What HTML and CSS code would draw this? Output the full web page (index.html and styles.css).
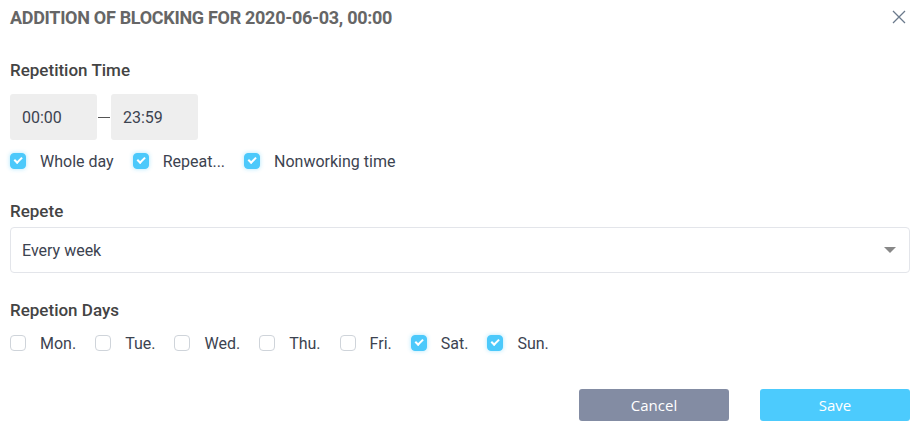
FILE: index.html
```html
<!DOCTYPE html>
<html lang="en">
<head>
    <meta charset="UTF-8">
    <title>Addition of blocking</title>
    <link rel="stylesheet" href="styles.css">
</head>
<body>
    <div class="dialog">
        <header class="dialog-head">
            <h1 class="dialog-title">ADDITION OF BLOCKING FOR 2020-06-03, 00:00</h1>
            <button class="close-btn" aria-label="Close">
                <svg width="14" height="14" viewBox="0 0 14 14"><path d="M1 1L13 13M13 1L1 13" stroke="#6b7a8c" stroke-width="1.3" fill="none"/></svg>
            </button>
        </header>

        <section class="field time-field">
            <h2 class="field-label">Repetition Time</h2>
            <div class="time-range">
                <div class="time-input">00:00</div>
                <span class="time-dash"></span>
                <div class="time-input">23:59</div>
            </div>
            <div class="check-row">
                <label class="check"><span class="box checked"></span>Whole day</label>
                <label class="check"><span class="box checked"></span>Repeat...</label>
                <label class="check"><span class="box checked"></span>Nonworking time</label>
            </div>
        </section>

        <section class="field repeat-field">
            <h2 class="field-label">Repete</h2>
            <div class="select">
                <span>Every week</span>
                <span class="select-arrow"></span>
            </div>
        </section>

        <section class="field days-field">
            <h2 class="field-label">Repetion Days</h2>
            <div class="check-row days">
                <label class="check"><span class="box"></span>Mon.</label>
                <label class="check"><span class="box"></span>Tue.</label>
                <label class="check"><span class="box"></span>Wed.</label>
                <label class="check"><span class="box"></span>Thu.</label>
                <label class="check"><span class="box"></span>Fri.</label>
                <label class="check"><span class="box checked"></span>Sat.</label>
                <label class="check"><span class="box checked"></span>Sun.</label>
            </div>
        </section>

        <footer class="dialog-actions">
            <button class="btn btn-cancel">Cancel</button>
            <button class="btn btn-save">Save</button>
        </footer>
    </div>
</body>
</html>
```

FILE: styles.css
```css
*, *::before, *::after {
    box-sizing: border-box;
}

body {
    margin: 0;
    background: #ffffff;
    font-family: 'Roboto', 'Liberation Sans', sans-serif;
    color: #444a52;
}

.dialog {
    width: 913px;
    padding: 5px 4px 0 10px;
}

.dialog-head {
    display: flex;
    justify-content: space-between;
    align-items: center;
    height: 24px;
}

.dialog-title {
    margin: 0;
    font-size: 18px;
    font-weight: 700;
    color: #666666;
    letter-spacing: -0.3px;
}

.close-btn {
    background: none;
    border: none;
    padding: 0;
    margin-right: 2px;
    width: 16px;
    height: 16px;
    display: flex;
    align-items: center;
    justify-content: center;
    cursor: pointer;
}

.field-label {
    margin: 0;
    font-size: 17px;
    font-weight: 500;
    color: #444444;
    line-height: 20px;
}

.time-field {
    margin-top: 31px;
}

.repeat-field {
    margin-top: 29px;
}

.days-field {
    margin-top: 27px;
}

.time-range {
    display: flex;
    align-items: center;
    margin-top: 14px;
}

.time-input {
    width: 87px;
    height: 46px;
    background: #eeeeee;
    border-radius: 3px;
    font-size: 16px;
    color: #3c4350;
    padding: 0 12px;
    display: flex;
    align-items: center;
}

.time-dash {
    display: block;
    width: 12px;
    height: 1px;
    background: #555555;
    margin: 0 1px;
}

.check-row {
    display: flex;
    align-items: center;
    gap: 19px;
    margin-top: 10px;
    height: 22px;
}

.check {
    display: flex;
    align-items: center;
    gap: 14px;
    font-size: 16px;
    color: #3c4350;
    cursor: pointer;
}

.box {
    width: 16px;
    height: 16px;
    border: 1px solid #cfd4da;
    border-radius: 4px;
    background: #ffffff;
    position: relative;
}

.box.checked {
    background: #4cc9fb;
    border-color: #4cc9fb;
    box-shadow: 0 0 4px rgba(76, 201, 251, 0.45);
}

.box.checked::after {
    content: "";
    position: absolute;
    left: 3px;
    top: 3px;
    width: 8px;
    height: 4.5px;
    border-left: 2px solid #ffffff;
    border-bottom: 2px solid #ffffff;
    transform: rotate(-45deg);
}

.select {
    margin-top: 6px;
    width: 900px;
    height: 46px;
    border: 1px solid #e3e5ea;
    border-radius: 4px;
    padding: 0 11px;
    display: flex;
    align-items: center;
    justify-content: space-between;
    font-size: 16px;
    color: #3c4350;
}

.select-arrow {
    width: 0;
    height: 0;
    border-left: 6px solid transparent;
    border-right: 6px solid transparent;
    border-top: 6px solid #888888;
    margin-right: 2px;
}

.days {
    margin-top: 12px;
}

.dialog-actions {
    display: flex;
    justify-content: flex-end;
    gap: 31px;
    margin-top: 35px;
    width: 900px;
}

.btn {
    width: 150px;
    height: 32px;
    border: none;
    border-radius: 3px;
    color: #ffffff;
    font-family: 'Open Sans', 'Liberation Sans', sans-serif;
    font-size: 15px;
    cursor: pointer;
}

.btn-cancel {
    background: #838ca3;
}

.btn-save {
    background: #4ccbfd;
}
```
